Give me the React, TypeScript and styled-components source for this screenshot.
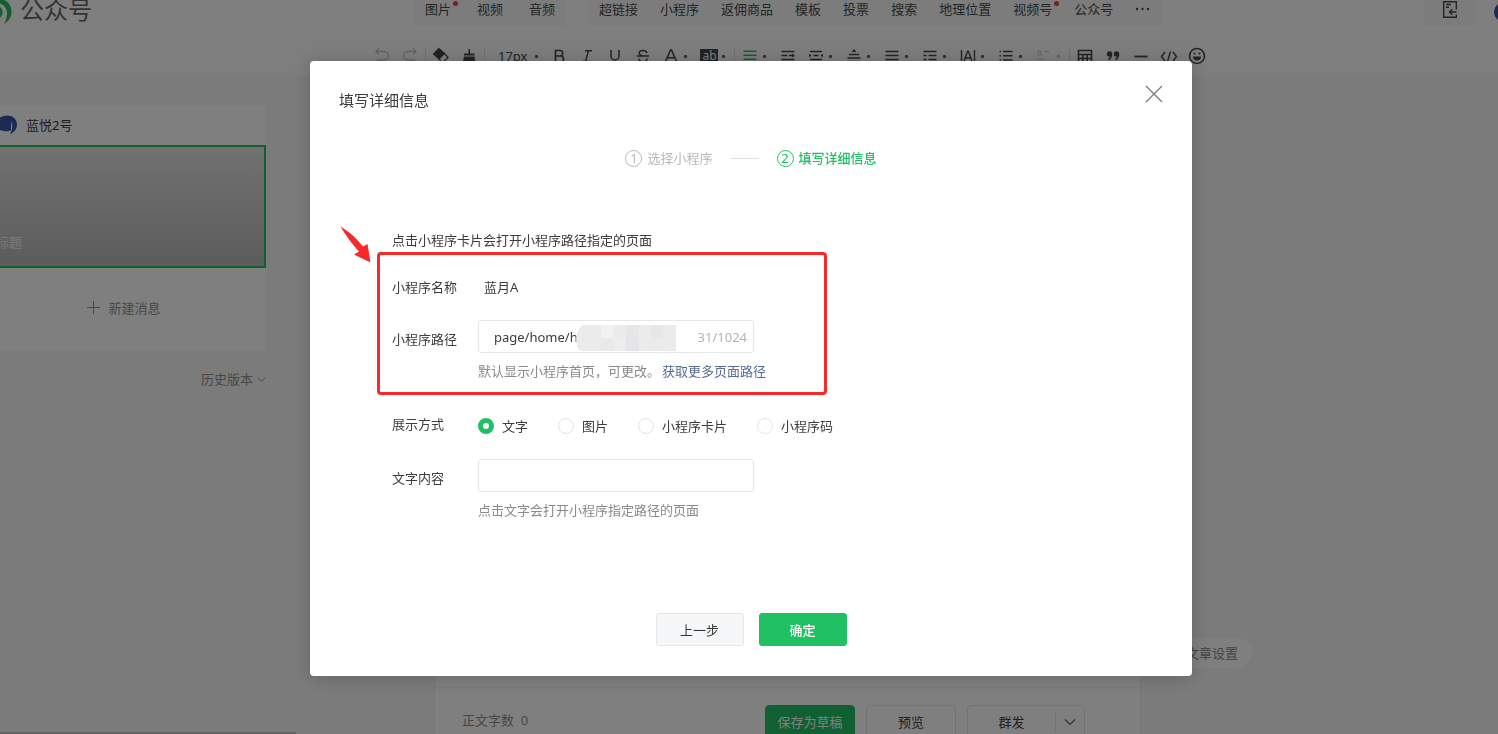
import React, { useState } from 'react';
import styled, { createGlobalStyle, css } from 'styled-components';

const GREEN = '#20c063';

const GlobalStyle = createGlobalStyle`
  * { box-sizing: border-box; }
  body {
    margin: 0;
    font-family: "Noto Sans", "Noto Sans CJK SC", sans-serif;
    font-size: 13px;
    line-height: 20px;
    color: #3c3c3c;
    background: #f6f6f6;
  }
  button, input {
    font: inherit;
    color: inherit;
  }
  button {
    border: 0;
    padding: 0;
    background: none;
    cursor: pointer;
  }
  svg { display: block; flex: none; }
`;

const Page = styled.div`
  display: flex;
  flex-direction: column;
  height: 100vh;
  overflow: hidden;
`;

/* ---------- top bar ---------- */

const Header = styled.header`
  display: flex;
  flex: none;
  height: 34px;
  background: #fff;
`;

const Brand = styled.div`
  display: flex;
  width: 414px;
  gap: 8px;
  font-size: 24px;
  color: #666;
`;

const InsertMenus = styled.nav`
  display: flex;
  flex: 1;
  gap: 22px;
`;

const MenuGroup = styled.div<{ $gap: number }>`
  display: flex;
  align-items: flex-start;
  gap: ${p => p.$gap}px;
  height: 26px;
  padding: 0 11px;
  background: #f8f8f8;
`;

const MenuItem = styled.button`
  position: relative;
  line-height: 18px;
  color: #4a4a4a;
  white-space: nowrap;
`;

const Badge = styled.i`
  position: absolute;
  top: 1px;
  right: -7px;
  width: 5px;
  height: 5px;
  border-radius: 50%;
  background: #e64340;
`;

const More = styled.button`
  padding-top: 7px;
  color: #4a4a4a;
`;

const Account = styled.div`
  display: flex;
  gap: 18px;
`;

const ImportButton = styled.button`
  display: flex;
  justify-content: center;
  width: 52px;
  height: 26px;
  background: #f8f8f8;
  color: #4a4a4a;
`;

/* ---------- formatting bar ---------- */

const Toolbar = styled.div`
  display: flex;
  flex: none;
  align-items: center;
  height: 42px;
  padding: 2px 0 0 368px;
  background: #fcfcfc;
  color: #45474d;
`;

const Tool = styled.button<{ $faint?: boolean; $green?: boolean }>`
  display: flex;
  align-items: center;
  height: 28px;
  padding: 0 5px;
  ${p => p.$faint && css`color: #c8c8c8;`}
  ${p => p.$green && css`color: ${GREEN};`}
`;

const SizeTool = styled(Tool)`
  padding: 0 4px 0 12px;
`;

const Caret = styled.i<{ $wide?: boolean; $faint?: boolean }>`
  width: 3px;
  height: 3px;
  margin-left: ${p => (p.$wide ? 8 : 4)}px;
  margin-right: 3px;
  border-radius: 1px;
  background: ${p => (p.$faint ? '#c8c8c8' : '#5c5e64')};
`;

const Divider = styled.i`
  flex: none;
  width: 1px;
  height: 16px;
  margin: 0 1px;
  background: #e4e4e4;
`;

/* ---------- workspace ---------- */

const Workspace = styled.main`
  display: flex;
  flex: 1;
  min-height: 0;
`;

const Sidebar = styled.aside`
  display: flex;
  flex-direction: column;
  flex: none;
  width: 296px;
  padding-top: 29px;
`;

const ArticleCard = styled.section`
  width: 266px;
  background: #fff;
  border-radius: 0 4px 4px 0;
`;

const CardHead = styled.div`
  display: flex;
  align-items: center;
  gap: 9px;
  height: 40px;
`;

const Cover = styled.div`
  display: flex;
  align-items: flex-end;
  height: 123px;
  padding-bottom: 14px;
  border: 2px solid ${GREEN};
  border-left: 0;
  background: linear-gradient(#e4e4e4, #b8b8b8);
  color: #f2f2f2;
`;

const CoverTitle = styled.span`
  margin-left: -4px;
`;

const NewMessage = styled.button`
  display: flex;
  align-items: center;
  justify-content: center;
  gap: 8px;
  width: 100%;
  height: 83px;
  padding: 0 18px 4px 0;
  color: #8e9093;
`;

const History = styled.button`
  display: flex;
  align-items: center;
  gap: 4px;
  margin: 18px 30px 0 auto;
  color: #909090;
`;

const Scrollbar = styled.div`
  height: 2px;
  margin-top: auto;
  background: #c6c6c6;
`;

const Editor = styled.section`
  display: flex;
  flex-direction: column;
  justify-content: flex-end;
  width: 705px;
  margin-left: 139px;
  background: #fff;
  box-shadow: 0 0 1px rgba(0, 0, 0, 0.12);
`;

const EditorFooter = styled.footer`
  display: flex;
  align-items: flex-start;
  gap: 11px;
  height: 47px;
  padding: 17px 55px 0 27px;
  border-top: 1px solid #f2f2f2;
`;

const WordCount = styled.p`
  margin: 5px auto 0 0;
  color: #8f8f8f;
`;

const FooterButton = styled.button<{ $primary?: boolean }>`
  width: 90px;
  height: 34px;
  border: 1px solid #e6e6e6;
  border-radius: 4px;
  ${p => p.$primary && css`
    border-color: ${GREEN};
    background: ${GREEN};
    color: #fff;
  `}
`;

const SplitButton = styled.div`
  display: flex;
  align-items: center;
  width: 118px;
  height: 34px;
  border: 1px solid #e6e6e6;
  border-radius: 4px;
`;

const SplitMain = styled.button`
  flex: 1;
`;

const SplitArrow = styled.button`
  display: flex;
  justify-content: center;
  align-items: center;
  width: 29px;
  height: 20px;
  border-left: 1px solid #e6e6e6;
  color: #666;
`;

const SettingsPill = styled.button`
  align-self: flex-end;
  height: 30px;
  margin: 0 0 66px 32px;
  padding: 0 14px;
  border-radius: 15px;
  background: #fff;
  color: #8a8a8a;
`;

/* ---------- dialog ---------- */

const Mask = styled.div`
  position: fixed;
  inset: 0;
  display: flex;
  align-items: center;
  justify-content: center;
  padding: 3px 0 0 4px;
  background: rgba(0, 0, 0, 0.5);
`;

const Dialog = styled.section`
  position: relative;
  width: 882px;
  padding-bottom: 30px;
  border-radius: 4px;
  background: #fff;
  box-shadow: 0 1px 20px rgba(0, 0, 0, 0.2);
`;

const DialogHead = styled.div`
  display: flex;
  align-items: center;
  justify-content: space-between;
  height: 78px;
  padding: 0 29px;
`;

const DialogTitle = styled.h3`
  margin: 0;
  font-size: 15px;
  font-weight: 400;
`;

const CloseButton = styled.button`
  align-self: flex-start;
  margin-top: 24px;
  color: #7c7c7c;
`;

const Steps = styled.ol`
  display: flex;
  align-items: center;
  justify-content: center;
  gap: 18px;
  margin: 9px 0 62px;
  padding: 0;
  list-style: none;
`;

const Step = styled.li<{ $active?: boolean }>`
  display: flex;
  align-items: center;
  gap: 5px;
  color: ${p => (p.$active ? GREEN : '#b8b8b8')};
  font-weight: ${p => (p.$active ? 500 : 400)};
`;

const StepNumber = styled.span`
  width: 17px;
  height: 17px;
  border: 1px solid;
  border-radius: 50%;
  line-height: 15px;
  text-align: center;
  font-weight: 400;
`;

const StepLine = styled.li`
  width: 28px;
  height: 1px;
  background: #e0e0e0;
`;

const Form = styled.form`
  margin: 0;
`;

const Fields = styled.div`
  padding: 0 82px;
`;

const Intro = styled.p`
  margin: 0;
`;

const Row = styled.div<{ $top: number }>`
  display: flex;
  align-items: flex-start;
  margin-top: ${p => p.$top}px;
`;

const RowLabel = styled.label<{ $input?: boolean }>`
  flex: none;
  width: 86px;
  padding-top: ${p => (p.$input ? 9 : 0)}px;
`;

const NameValue = styled.span`
  padding-left: 6px;
`;

const InputBox = styled.div`
  position: relative;
  display: flex;
  align-items: center;
  width: 276px;
  height: 33px;
  padding: 0 6px 0 15px;
  border: 1px solid #e7e7eb;
  border-radius: 3px;
`;

const TextInput = styled.input`
  flex: 1;
  min-width: 0;
  padding: 0;
  border: 0;
  outline: 0;
  background: none;
`;

const Counter = styled.span`
  color: #b4b4b4;
`;

const Mosaic = styled.svg`
  position: absolute;
  top: 4px;
  left: 96px;
`;

const Help = styled.p`
  margin: 8px 0 0;
  color: #8a8a8a;
`;

const Link = styled.a`
  margin-left: 2px;
  color: #576b95;
  text-decoration: none;
`;

const RadioGroup = styled.div`
  display: flex;
  gap: 30px;
  padding-top: 2px;
`;

const RadioLabel = styled.label`
  display: flex;
  align-items: center;
  gap: 8px;
`;

const Radio = styled.input`
  appearance: none;
  width: 16px;
  height: 16px;
  margin: 0;
  border: 1px solid #e3e3e3;
  border-radius: 50%;
  background: #fff;
  &:checked {
    border: 5px solid ${GREEN};
  }
`;

const Actions = styled.div`
  display: flex;
  justify-content: center;
  gap: 15px;
  margin-top: 93px;
`;

const ActionButton = styled.button<{ $primary?: boolean }>`
  width: 88px;
  height: 33px;
  border: 1px solid ${p => (p.$primary ? GREEN : '#e4e6ea')};
  border-radius: 3px;
  background: ${p => (p.$primary ? GREEN : '#f6f7f9')};
  color: ${p => (p.$primary ? '#fff' : '#353535')};
  font-weight: ${p => (p.$primary ? 500 : 400)};
`;

const Highlight = styled.div`
  position: absolute;
  top: 191px;
  left: 67px;
  width: 450px;
  height: 143px;
  border: 3px solid #f62a2a;
  border-radius: 4px;
  pointer-events: none;
`;

const Pointer = styled.svg`
  position: absolute;
  top: 165px;
  left: 30px;
`;

/* ---------- icons ---------- */

const Icon = ({ children, sw = 1.5 }: { children: React.ReactNode; sw?: number }) => (
  <svg width="18" height="18" viewBox="0 0 18 18" fill="none" stroke="currentColor" strokeWidth={sw}>
    {children}
  </svg>
);

const glyphs: Record<string, React.ReactNode> = {
  undo: <Icon sw={1.3}><path d="M6 1.5 3 4.5l3 3M3 4.5h8a4 4 0 0 1 0 8.5H4" /></Icon>,
  redo: <Icon sw={1.3}><path d="m12 1.5 3 3-3 3M15 4.5H7a4 4 0 0 0 0 8.5h7" /></Icon>,
  eraser: (
    <Icon sw={1.2}>
      <path d="M7 1.5 1.5 7l5.500 5 5.500-5.500z" fill="currentColor" />
      <path d="m12 6 4 4.500-4.500 4.500h-2L7 12" />
    </Icon>
  ),
  brush: (
    <Icon sw={1.2}>
      <path d="M8.500 2h1.500v4.500h4.500V8.500H4V6.500h4.500z" fill="currentColor" stroke="none" />
      <path d="M4 9.500h10.500l1 7H2.500z" fill="currentColor" stroke="none" />
    </Icon>
  ),
  bold: <Icon sw={1.6}><path d="M5.500 3.500h4.500a2.700 2.700 0 0 1 0 5.500H5.500zM5.500 9h5a3 3 0 0 1 0 6h-5z" /></Icon>,
  italic: <Icon sw={1.4}><path d="M7 3.700h7M4 14.500h7M10.500 3.700l-3 10.800" /></Icon>,
  underline: <Icon sw={1.5}><path d="M5 3v6a4 4 0 0 0 8 0V3M4 16h10" /></Icon>,
  strike: (
    <Icon sw={1.4}>
      <path d="M13 6C12.500 4.200 11 3.500 9 3.500c-2.500 0-3.800 1.200-3.800 2.700 0 1.300 1 2.100 3.800 2.800M3 9h12M13 11.500c0 2-1.700 3.200-4 3.200s-3.800-1-4.200-3" />
    </Icon>
  ),
  color: <Icon sw={1.6}><path d="m3.500 14.500 5-11.500h1l5 11.500M5.300 10.700h7.400" /></Icon>,
  green: <Icon sw={1.6}><path d="M2.500 4.200h13M2.500 8.200h13M2.500 12.200h13" /></Icon>,
  indent: <Icon><path d="M2.500 4.500h13M2.500 8.500h6M2.500 12.500h13M10 8.500h4" /><path d="m13 6.500 3 2-3 2z" fill="currentColor" stroke="none" /></Icon>,
  margins: (
    <Icon>
      <path d="M3 4.500h12M6.500 8.500h5M3 12.500h12" />
      <path d="m2 6.800 2.500 1.700L2 10.200zM16 6.800l-2.500 1.700 2.500 1.700z" fill="currentColor" stroke="none" />
    </Icon>
  ),
  above: <Icon><path d="M4 7.500h10M2.500 11h13M2.500 14.500h13" /><path d="M9 2l2.500 3h-5z" fill="currentColor" stroke="none" /></Icon>,
  justify: <Icon><path d="M2.500 4.500h13M2.500 8.500h13M2.500 12.500h13" /></Icon>,
  lineheight: <Icon><path d="M2.500 4.500h13M2.500 8.500h3M7.500 8.500h8M2.500 12.500h3M7.500 12.500h8" /></Icon>,
  spacing: <Icon sw={1.4}><path d="M2.500 3v12.500M15.500 3v12.500M5 14l3.500-9.500h1L13 14M6.200 11h5.600" /></Icon>,
  list: <Icon><path d="M6 4.500h9.500M6 8.700h9.500M6 13h9.500M2.500 4.500H4M2.500 8.700H4M2.500 13H4" /></Icon>,
  float: <Icon sw={1}><path d="M3 4h3v4H3zM9 4.500h5M3 12h6" /></Icon>,
  table: <Icon sw={1.6}><path d="M2.500 3.500h13v12h-13zM2.500 7.500h13M2.500 11.500h13M6.800 7.500v8M11.200 7.500v8" /></Icon>,
  quote: (
    <Icon>
      <g fill="currentColor" stroke="none">
        <circle cx="5.500" cy="7" r="2.700" /><circle cx="12.500" cy="7" r="2.700" />
      </g>
      <path d="M7.500 7c0 2.500-1 4.500-3 5.500M14.500 7c0 2.500-1 4.500-3 5.500" />
    </Icon>
  ),
  line: <Icon sw={1.8}><path d="M2.500 9.500h13" /></Icon>,
  code: <Icon sw={1.4}><path d="M5 5 1.500 9.500 5 14M13 5l3.500 4.500L13 14M10.500 4.500l-3 10" /></Icon>,
  smile: (
    <Icon sw={1.6}>
      <circle cx="9" cy="9" r="7.500" />
      <path d="M5 9.500h8c0 2.500-1.600 4-4 4s-4-1.500-4-4z" fill="currentColor" stroke="none" />
      <path d="M6.500 5.500v2M11.500 5.500v2" />
    </Icon>
  ),
};

const Mark = styled.span`
  width: 18px;
  height: 14px;
  background: #45474d;
  color: #fff;
  font-size: 12px;
  line-height: 13px;
  text-align: center;
`;

type ToolSpec = { icon: string; title: string; caret?: boolean; faint?: boolean; green?: boolean } | null;

const toolsBefore: ToolSpec[] = [
  { icon: 'undo', title: '撤销', faint: true },
  { icon: 'redo', title: '重做', faint: true },
  null,
  { icon: 'eraser', title: '清除格式' },
  { icon: 'brush', title: '格式刷' },
  null,
];

const toolsText: ToolSpec[] = [
  { icon: 'bold', title: '加粗' },
  { icon: 'italic', title: '斜体' },
  { icon: 'underline', title: '下划线' },
  { icon: 'strike', title: '删除线' },
  { icon: 'color', title: '字体颜色', caret: true },
];

const toolsAfter: ToolSpec[] = [
  null,
  { icon: 'green', title: '对齐', caret: true, green: true },
  { icon: 'indent', title: '首行缩进' },
  { icon: 'margins', title: '两端缩进', caret: true },
  { icon: 'above', title: '段前距', caret: true },
  { icon: 'justify', title: '段后距', caret: true },
  { icon: 'lineheight', title: '行间距', caret: true },
  { icon: 'spacing', title: '字间距', caret: true },
  { icon: 'list', title: '列表', caret: true },
  { icon: 'float', title: '浮动', caret: true, faint: true },
  null,
  { icon: 'table', title: '表格' },
  { icon: 'quote', title: '引用' },
  { icon: 'line', title: '分隔线' },
  { icon: 'code', title: '代码' },
  { icon: 'smile', title: '表情' },
];

const ToolList = ({ tools }: { tools: ToolSpec[] }) => (
  <>
    {tools.map((t, i) =>
      t ? (
        <Tool key={t.icon} aria-label={t.title} $faint={t.faint} $green={t.green}>
          {glyphs[t.icon]}
          {t.caret && <Caret $faint={t.faint} />}
        </Tool>
      ) : (
        <Divider key={i} />
      ),
    )}
  </>
);

const Chevron = ({ size }: { size: number }) => (
  <svg width={size} height={size} viewBox="0 0 12 12" fill="none" stroke="currentColor" strokeWidth="1.2">
    <path d="m1 3.500 5 5 5-5" />
  </svg>
);

const mosaicCells = [
  [26, 0, '#f2f2f3'], [38, 0, '#ebebec'], [51, 0, '#e6e6e7'], [64, 0, '#ececec'], [76, 0, '#e7e7e9'], [88, 0, '#ebebeb'],
  [26, 13, '#e9e9ea'], [38, 13, '#ededed'], [51, 13, '#e5e5e7'], [64, 13, '#ebebec'], [76, 13, '#eaeaea'], [88, 13, '#ececed'],
] as const;

const displayModes = ['文字', '图片', '小程序卡片', '小程序码'];
const mediaMenu = ['图片', '视频', '音频'];
const insertMenu = ['超链接', '小程序', '返佣商品', '模板', '投票', '搜索', '地理位置', '视频号', '公众号'];

export default function App() {
  const [mode, setMode] = useState('文字');
  const [path, setPath] = useState('page/home/h');
  const [text, setText] = useState('');

  return (
    <>
      <GlobalStyle />
      <Page>
        <Header>
          <Brand>
            <svg width="12" height="25" viewBox="0 0 12 25">
              <path d="M0 0h4c4.500 2 7.500 6 7.500 11.500 0 5.500-3 10-7.500 12.500 1.500-3 3-6.500 3-10.500C7 9 5 5.500 0 3.500z" fill={GREEN} />
              <path d="M0 7c2 1.500 3 4 2.500 6.500S1 17 0 17.500z" fill={GREEN} />
            </svg>
            公众号
          </Brand>
          <InsertMenus>
            <MenuGroup $gap={26}>
              {mediaMenu.map(m => <MenuItem key={m}>{m}{m === '图片' && <Badge />}</MenuItem>)}
            </MenuGroup>
            <MenuGroup $gap={22}>
              {insertMenu.map(m => <MenuItem key={m}>{m}{m === '视频号' && <Badge />}</MenuItem>)}
              <More aria-label="更多">
                <svg width="15" height="4" viewBox="0 0 15 4" fill="currentColor">
                  <circle cx="2" cy="2" r="1.2" /><circle cx="7.5" cy="2" r="1.2" /><circle cx="13" cy="2" r="1.2" />
                </svg>
              </More>
            </MenuGroup>
          </InsertMenus>
          <Account>
            <ImportButton aria-label="导入">
              <svg width="16" height="19" viewBox="0 0 16 19" fill="none" stroke="currentColor" strokeWidth="1.4">
                <path d="M14.300 9.500V1.700H1.700v15.600h12.600v-2.800M4 4.500h5M4 7.200h3M14.500 12H7.500M10.300 9.200 7.500 12l2.800 2.800" />
              </svg>
            </ImportButton>
            <svg width="4" height="24" viewBox="0 0 4 24"><circle cx="10" cy="12" r="10" fill="#3455a4" /></svg>
          </Account>
        </Header>

        <Toolbar>
          <ToolList tools={toolsBefore} />
          <SizeTool aria-label="字号"><span>17px</span><Caret $wide /></SizeTool>
          <ToolList tools={toolsText} />
          <Tool aria-label="背景色"><Mark>ab</Mark><Caret /></Tool>
          <ToolList tools={toolsAfter} />
        </Toolbar>

        <Workspace>
          <Sidebar>
            <ArticleCard>
              <CardHead>
                <svg width="17" height="20" viewBox="0 0 17 20">
                  <path d="M0 2.500C7-2 17 1 17 9.500c0 5-3.500 8.500-7 9.500 2.500-4 3-8 1.500-13-.5 4-.5 7-.5 9-2 2-7 1.500-11 0z" fill="#3455a4" />
                </svg>
                蓝悦2号
              </CardHead>
              <Cover><CoverTitle>标题</CoverTitle></Cover>
              <NewMessage>
                <svg width="13" height="13" viewBox="0 0 13 13" stroke="currentColor"><path d="M6.500 0v13M0 6.500h13" /></svg>
                新建消息
              </NewMessage>
            </ArticleCard>
            <History>历史版本<Chevron size={9} /></History>
            <Scrollbar />
          </Sidebar>

          <Editor>
            <EditorFooter>
              <WordCount>正文字数&nbsp; 0</WordCount>
              <FooterButton $primary>保存为草稿</FooterButton>
              <FooterButton>预览</FooterButton>
              <SplitButton>
                <SplitMain>群发</SplitMain>
                <SplitArrow aria-label="更多群发选项"><Chevron size={12} /></SplitArrow>
              </SplitButton>
            </EditorFooter>
          </Editor>

          <SettingsPill>文章设置</SettingsPill>
        </Workspace>
      </Page>

      <Mask>
        <Dialog role="dialog" aria-labelledby="dialog-title">
          <DialogHead>
            <DialogTitle id="dialog-title">填写详细信息</DialogTitle>
            <CloseButton aria-label="关闭">
              <svg width="18" height="18" viewBox="0 0 18 18" stroke="currentColor" strokeWidth="1.3">
                <path d="m1 1 16 16M17 1 1 17" />
              </svg>
            </CloseButton>
          </DialogHead>

          <Steps>
            <Step><StepNumber>1</StepNumber>选择小程序</Step>
            <StepLine />
            <Step $active><StepNumber>2</StepNumber>填写详细信息</Step>
          </Steps>

          <Form onSubmit={e => e.preventDefault()}>
            <Fields>
              <Intro>点击小程序卡片会打开小程序路径指定的页面</Intro>
              <Row $top={27}>
                <RowLabel as="span">小程序名称</RowLabel>
                <NameValue>蓝月A</NameValue>
              </Row>
              <Row $top={23}>
                <RowLabel htmlFor="path" $input>小程序路径</RowLabel>
                <div>
                  <InputBox>
                    <TextInput id="path" value={path} onChange={e => setPath(e.target.value)} />
                    <Counter>31/1024</Counter>
                    <Mosaic width="101" height="26" viewBox="0 0 101 26">
                      <path d="M8 0h93v26H5C-1 20 0 5 8 0z" fill="#ebebec" />
                      {mosaicCells.map(([x, y, fill]) => (
                        <rect key={`${x}-${y}`} x={x} y={y} width="13" height="13" fill={fill} />
                      ))}
                    </Mosaic>
                  </InputBox>
                  <Help>默认显示小程序首页，可更改。<Link href="#paths">获取更多页面路径</Link></Help>
                </div>
              </Row>
              <Row $top={33}>
                <RowLabel as="span" id="mode-label">展示方式</RowLabel>
                <RadioGroup role="radiogroup" aria-labelledby="mode-label">
                  {displayModes.map(m => (
                    <RadioLabel key={m}>
                      <Radio type="radio" name="mode" checked={mode === m} onChange={() => setMode(m)} />
                      {m}
                    </RadioLabel>
                  ))}
                </RadioGroup>
              </Row>
              <Row $top={23}>
                <RowLabel htmlFor="content" $input>文字内容</RowLabel>
                <div>
                  <InputBox>
                    <TextInput id="content" value={text} onChange={e => setText(e.target.value)} />
                  </InputBox>
                  <Help>点击文字会打开小程序指定路径的页面</Help>
                </div>
              </Row>
            </Fields>
            <Actions>
              <ActionButton type="button">上一步</ActionButton>
              <ActionButton type="submit" $primary>确定</ActionButton>
            </Actions>
          </Form>

          <Highlight />
          <Pointer width="31" height="37" viewBox="0 0 31 37">
            <path d="M.5.5C10 6 17 13 23 20.500l4.500-2.500L30.500 36.500 14 28.500l5-3C13 19 6 10 .5.500z" fill="#f62a2a" />
          </Pointer>
        </Dialog>
      </Mask>
    </>
  );
}
